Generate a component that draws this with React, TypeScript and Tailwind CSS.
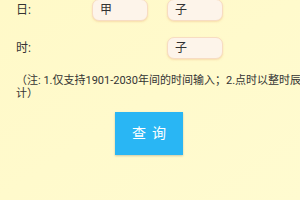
const font = { fontFamily: 'Roboto, "Noto Sans CJK SC", sans-serif' };

function Box({ text }: { text: string }) {
  return (
    <div className="w-[56px] h-[22px] flex items-center pl-[7px] rounded-[7px] border border-[#f7dcc2] bg-[#fdf4ea] shadow-[0_1px_2px_rgba(235,170,110,0.35)] text-[12px] text-[#333]">
      {text}
    </div>
  );
}

export default function App() {
  return (
    <div
      className="w-[300px] h-[200px] overflow-hidden bg-gradient-to-br from-[#fff9c8] to-[#fffbd0] text-[#333]"
      style={font}
    >
      <div className="-mt-px flex items-center h-[22px]">
        <div className="w-[92px] pl-[16px] text-[12px]">日:</div>
        <Box text="甲" />
        <div className="w-[19px]" />
        <Box text="子" />
      </div>

      <div className="mt-[16px] flex items-center h-[22px]">
        <div className="w-[167px] pl-[16px] text-[12px]">时:</div>
        <Box text="子" />
      </div>

      <p className="mt-[16px] pl-[16px] text-[11px] leading-[12.5px] text-[#333] whitespace-nowrap">
        （注: 1.仅支持1901-2030年间的时间输入；2.点时以整时辰
        <br />
        计）
      </p>

      <button className="mt-[12px] ml-[115px] w-[68px] h-[43px] bg-[#29b6f4] text-white text-[14px] tracking-[6px] pl-[6px] shadow-[0_1px_2px_rgba(0,0,0,0.2)] flex items-center justify-center">
        查询
      </button>
    </div>
  );
}
